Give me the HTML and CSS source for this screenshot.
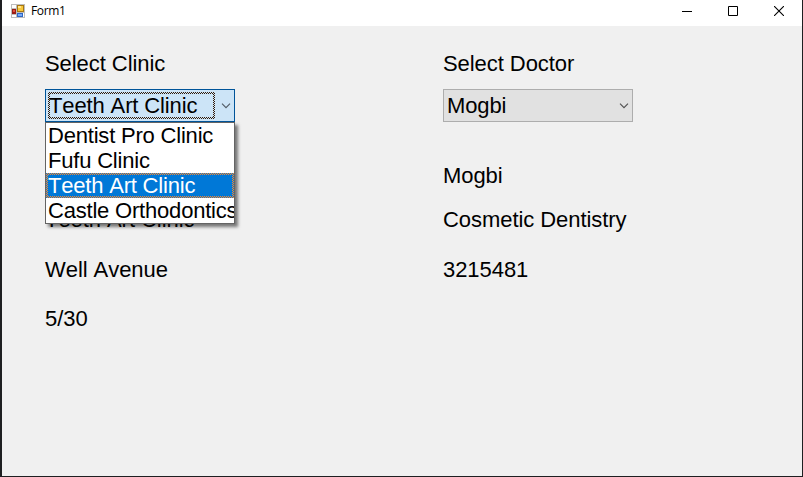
FILE: index.html
```html
<!DOCTYPE html>
<html lang="en">
<head>
<meta charset="utf-8">
<title>Form1</title>
<link rel="stylesheet" href="styles.css">
</head>
<body>
<div class="window">
  <header class="titlebar">
    <svg class="app-icon" width="14" height="14" viewBox="0 0 14 14" shape-rendering="crispEdges">
      <rect width="14" height="14" fill="#bdbdbd"/>
      <path d="M1 1h4v3H1zM1 11h4v2H1zM12 9h1v4h-1z" fill="#fff"/>
      <rect x="6" y="1" width="7" height="7" fill="#a87810"/>
      <rect x="7" y="2" width="5" height="5" fill="#f8c83c"/>
      <rect x="7" y="2" width="3" height="2" fill="#ffe58a"/>
      <rect x="1" y="5" width="4" height="5" fill="#9c1c14"/>
      <rect x="2" y="6" width="2" height="2" fill="#e0503c"/>
      <rect x="6" y="9" width="6" height="4" fill="#2f66c4"/>
      <rect x="7" y="10" width="4" height="2" fill="#76aaf8"/>
    </svg>
    <span class="title">Form1</span>
    <div class="controls">
      <svg width="10" height="10" viewBox="0 0 10 10" shape-rendering="crispEdges"><path d="M0 5h10v1H0z"/></svg>
      <svg width="10" height="10" viewBox="0 0 10 10"><path d="M.5 .5h9v9h-9z" fill="none" stroke="#000"/></svg>
      <svg width="10" height="10" viewBox="0 0 10 10"><path d="M0 0l10 10M10 0L0 10" fill="none" stroke="#000" stroke-width="1.1"/></svg>
    </div>
  </header>
  <main class="form">
    <section class="column">
      <div class="label">Select Clinic</div>
      <div class="combo combo-open">
        <span class="combo-text">Teeth Art Clinic</span>
        <svg class="chevron" width="9" height="6" viewBox="0 0 9 6"><path d="M1 .7l4 4 4-4" fill="none" stroke="#505a64" stroke-width="1.1"/></svg>
        <div class="list">
          <div class="option">Dentist Pro Clinic</div>
          <div class="option">Fufu Clinic</div>
          <div class="option selected">Teeth Art Clinic</div>
          <div class="option">Castle Orthodontics</div>
        </div>
      </div>
      <div class="details">
        <div class="label"></div>
        <div class="label">Teeth Art Clinic</div>
        <div class="label">Well Avenue</div>
        <div class="label">5/30</div>
      </div>
    </section>
    <section class="column">
      <div class="label">Select Doctor</div>
      <div class="combo">
        <span class="combo-text">Mogbi</span>
        <svg class="chevron" width="9" height="6" viewBox="0 0 9 6"><path d="M1 .7l4 4 4-4" fill="none" stroke="#505050" stroke-width="1.1"/></svg>
      </div>
      <div class="details">
        <div class="label">Mogbi</div>
        <div class="label">Cosmetic Dentistry</div>
        <div class="label">3215481</div>
      </div>
    </section>
  </main>
</div>
</body>
</html>
```
FILE: styles.css
```css
* { box-sizing: border-box; }

body {
  margin: 0;
  background: #1e1f21;
}

.window {
  display: flex;
  flex-direction: column;
  height: 477px;
  border: solid #1e1f21;
  border-width: 0 1px 1px 2px;
  background: #f0f0f0;
  color: #000;
  font-family: "Liberation Sans", Arial, sans-serif;
  font-kerning: none;
}

.titlebar {
  display: flex;
  align-items: center;
  height: 26px;
  padding: 0 18px 5px 9px;
  background: #fff;
}

.title {
  margin-left: 6px;
  padding-top: 1px;
  font: 12px/16px "Open Sans", "Noto Sans", sans-serif;
  letter-spacing: -.35px;
}

.controls {
  display: flex;
  gap: 36px;
  margin-left: auto;
}

.controls svg { display: block; }

.form {
  display: grid;
  grid-template-columns: 398px 1fr;
  padding: 25px 0 0 43px;
}

.label {
  height: 25px;
  font-size: 22px;
  line-height: 25px;
  letter-spacing: -.06px;
  white-space: nowrap;
}

.combo {
  position: relative;
  display: flex;
  align-items: center;
  justify-content: space-between;
  width: 190px;
  height: 33px;
  margin-top: 13px;
  padding: 0 4px 0 2px;
  border: 1px solid #adadad;
  background: #e1e1e1;
  font-size: 22px;
  line-height: 23px;
  letter-spacing: -.13px;
  white-space: nowrap;
}

.combo-open {
  border-color: #005499;
  background: #cce4f7;
}

.combo-text {
  width: 167px;
  height: 27px;
  text-indent: -1px;
  border: 2px solid transparent;
}

.chevron { overflow: visible; }

/* Alternating-pixel focus rectangle */
.combo-open .combo-text {
  background:
    linear-gradient(#cce4f7, #cce4f7) padding-box,
    repeating-conic-gradient(#331b08 0 25%, #cce4f7 0 50%) 0 0 / 2px 2px border-box;
}

.list {
  position: absolute;
  z-index: 1;
  top: 32px;
  left: -1px;
  width: 190px;
  height: 102px;
  border: 1px solid #646464;
  background: #fff;
  box-shadow: 3px 3px 3px 0 rgba(0, 0, 0, .5);
  clip-path: inset(0 -8px -8px 0);
  letter-spacing: -.2px;
}

.option {
  height: 25px;
  border: 2px solid transparent;
  line-height: 21px;
  overflow: hidden;
  overflow-clip-margin: border-box;
}

.selected {
  color: #fff;
  background:
    linear-gradient(#0078d7, #0078d7) padding-box,
    repeating-conic-gradient(#ff8728 0 25%, #0078d7 0 50%) 0 0 / 2px 2px border-box;
}

.option:not(.selected) {
  padding: 2px 0 2px 2px;
  border: 0;
}

.details {
  display: grid;
  grid-template-rows: 44px 50px 49px 25px;
  margin-top: 41px;
}
```
